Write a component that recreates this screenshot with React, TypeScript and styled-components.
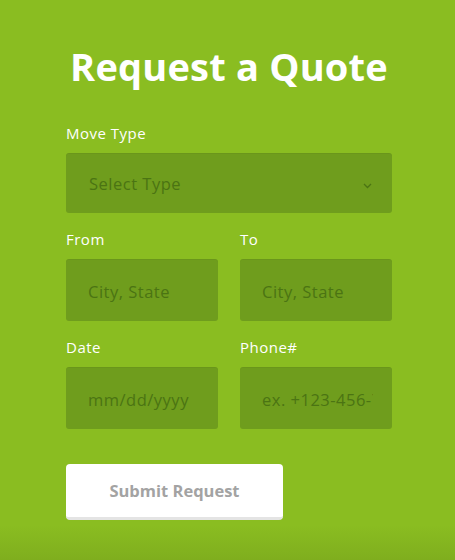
import React from "react";
import styled, { createGlobalStyle } from "styled-components";

const GlobalStyle = createGlobalStyle`
  html, body {
    margin: 0;
    padding: 0;
  }
  body {
    font-family: "Open Sans", "Liberation Sans", sans-serif;
    background: #8abd21;
  }
`;

const Page = styled.div`
  min-height: 560px;
  box-sizing: border-box;
  padding: 40px 63px 0 66px;
  background: linear-gradient(
    to bottom,
    #8abd21 0,
    #8abd21 525px,
    #7fae1e 560px
  );
`;

const Form = styled.form`
  width: 326px;
  display: grid;
  grid-template-columns: minmax(0, 1fr) minmax(0, 1fr);
  column-gap: 22px;
  row-gap: 17px;
`;

const Title = styled.h1`
  grid-column: 1 / -1;
  margin: 0 0 15px;
  text-align: center;
  color: #fff;
  font-size: 38px;
  line-height: 52px;
  font-weight: 700;
  letter-spacing: 0.2px;
`;

const Group = styled.div<{ $wide?: boolean }>`
  grid-column: ${({ $wide }) => ($wide ? "1 / -1" : "auto")};
  display: flex;
  flex-direction: column;
  position: relative;
  min-width: 0;
`;

const Label = styled.label`
  display: block;
  color: #fff;
  font-size: 15px;
  line-height: 18px;
  letter-spacing: 0.5px;
  margin-bottom: 11px;
`;

const fieldCss = `
  box-sizing: border-box;
  width: 100%;
  min-width: 0;
  border: none;
  border-radius: 3px;
  background: #6f9d1d;
  box-shadow: inset 0 1px 0 rgba(0, 0, 0, 0.04);
  font-family: "Open Sans", "Liberation Sans", sans-serif;
  font-size: 16.5px;
  letter-spacing: 0.5px;
  color: #4b7413;
  outline: none;
`;

const Select = styled.select`
  ${fieldCss}
  height: 60px;
  padding: 0 40px 0 23px;
  appearance: none;
  -webkit-appearance: none;
`;

const Input = styled.input`
  ${fieldCss}
  height: 62px;
  padding: 2px 19px 0 22px;
  &::placeholder {
    color: #4b7413;
    opacity: 1;
  }
`;

const Chevron = styled.svg`
  position: absolute;
  right: 20px;
  bottom: 24px;
  pointer-events: none;
`;

const Submit = styled.button`
  grid-column: 1 / -1;
  justify-self: start;
  margin-top: 18px;
  width: 217px;
  height: 56px;
  border: none;
  border-bottom: 3px solid #e4e4e4;
  border-radius: 4px;
  background: #fff;
  color: #a3a3a3;
  font-family: "Open Sans", "Liberation Sans", sans-serif;
  font-size: 16.5px;
  font-weight: 700;
  cursor: pointer;
  padding: 0;
`;

export default function App() {
  return (
    <Page>
      <GlobalStyle />
      <Form onSubmit={(e) => e.preventDefault()}>
        <Title>Request a Quote</Title>
        <Group $wide>
          <Label>Move Type</Label>
          <Select defaultValue="">
            <option value="" disabled>
              Select Type
            </option>
            <option>Local</option>
            <option>Long Distance</option>
          </Select>
          <Chevron width="9" height="6" viewBox="0 0 9 6">
            <polyline
              points="1,1 4.5,4.5 8,1"
              fill="none"
              stroke="#4b7413"
              strokeWidth="1.3"
            />
          </Chevron>
        </Group>
        <Group>
          <Label>From</Label>
          <Input placeholder="City, State" />
        </Group>
        <Group>
          <Label>To</Label>
          <Input placeholder="City, State" />
        </Group>
        <Group>
          <Label>Date</Label>
          <Input placeholder="mm/dd/yyyy" />
        </Group>
        <Group>
          <Label>Phone#</Label>
          <Input placeholder="ex. +123-456-7890" />
        </Group>
        <Submit type="submit">Submit Request</Submit>
      </Form>
    </Page>
  );
}
